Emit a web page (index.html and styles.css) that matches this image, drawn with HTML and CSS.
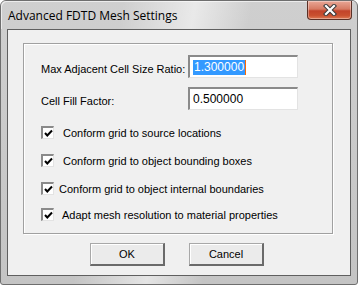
FILE: index.html
```html
<!DOCTYPE html>
<html>
<head>
<meta charset="utf-8">
<link rel="stylesheet" href="styles.css">
</head>
<body>
<div class="window">
  <div class="titlebar">
    <span class="title">Advanced FDTD Mesh Settings</span>
    <div class="close">
      <svg width="18" height="12" viewBox="0 0 18 12">
        <path d="M5 2 L13 10 M13 2 L5 10" stroke="#3a3a3a" stroke-width="4.2" stroke-linecap="square"/>
        <path d="M5 2 L13 10 M13 2 L5 10" stroke="#ffffff" stroke-width="2.2" stroke-linecap="square"/>
      </svg>
    </div>
  </div>
  <div class="client">
    <div class="group">
      <div class="fields">
        <label class="label">Max Adjacent Cell Size Ratio:</label>
        <div class="edit"><span class="sel">1.300000</span><span class="caret"></span></div>
        <label class="label">Cell Fill Factor:</label>
        <div class="edit">0.500000</div>
      </div>
      <div class="checks">
        <div class="check"><span class="box"><svg width="9" height="9" viewBox="0 0 9 9"><path d="M1 4 L3.3 6.5 L8 1.5" fill="none" stroke="#000" stroke-width="2"/></svg></span><span class="ctext">Conform grid to source locations</span></div>
        <div class="check"><span class="box"><svg width="9" height="9" viewBox="0 0 9 9"><path d="M1 4 L3.3 6.5 L8 1.5" fill="none" stroke="#000" stroke-width="2"/></svg></span><span class="ctext">Conform grid to object bounding boxes</span></div>
        <div class="check tight"><span class="box"><svg width="9" height="9" viewBox="0 0 9 9"><path d="M1 4 L3.3 6.5 L8 1.5" fill="none" stroke="#000" stroke-width="2"/></svg></span><span class="ctext">Conform grid to object internal boundaries</span></div>
        <div class="check mid"><span class="box"><svg width="9" height="9" viewBox="0 0 9 9"><path d="M1 4 L3.3 6.5 L8 1.5" fill="none" stroke="#000" stroke-width="2"/></svg></span><span class="ctext">Adapt mesh resolution to material properties</span></div>
      </div>
    </div>
    <div class="buttons">
      <button class="btn">OK</button>
      <button class="btn">Cancel</button>
    </div>
  </div>
</div>
</body>
</html>
```
FILE: styles.css
```css
html, body {
  margin: 0;
  padding: 0;
  width: 358px;
  height: 285px;
  overflow: hidden;
  background: #ffffff;
}
.window {
  box-sizing: border-box;
  width: 358px;
  height: 285px;
  border: 1px solid #6e6e6e;
  border-radius: 6px 6px 3px 3px;
  background:
    linear-gradient(100deg, rgba(255,255,255,0) 30%, rgba(255,255,255,0.55) 48%, rgba(255,255,255,0) 62%),
    linear-gradient(180deg, #cfcfcf 0%, #c4c4c4 100%);
  display: flex;
  flex-direction: column;
  font-family: "Liberation Sans", Arial, sans-serif;
  font-size: 11px;
  color: #000;
}
.titlebar {
  height: 28px;
  display: flex;
  align-items: flex-start;
  justify-content: space-between;
  box-shadow: inset 1px 1px 0 rgba(255,255,255,0.6);
  border-radius: 5px 5px 0 0;
}
.title {
  font-family: "Open Sans", "Liberation Sans", sans-serif;
  font-size: 12px;
  margin: 6px 0 0 7px;
  color: #000;
}
.close {
  width: 43px;
  height: 18px;
  margin-right: 5px;
  border: 1px solid #5a3026;
  border-top: none;
  border-radius: 0 0 4px 4px;
  background: linear-gradient(180deg, #e9a796 0%, #d67a63 45%, #c2432a 55%, #c9502f 80%, #dd7a55 100%);
  box-shadow: inset 0 0 0 1px rgba(255,255,255,0.35);
  display: flex;
  align-items: center;
  justify-content: center;
}
.client {
  flex: 1;
  margin: 0 6px 8px 6px;
  border: 1px solid #5f5f5f;
  background: #f0f0f0;
  padding: 13px 17px 0 15px;
  display: flex;
  flex-direction: column;
}
.group {
  box-sizing: border-box;
  height: 191px;
  border: 1px solid #a0a0a0;
  box-shadow: inset 1px 1px 0 #ffffff, 1px 1px 0 #ffffff;
  padding: 11px 0 0 17px;
}
.fields {
  display: grid;
  grid-template-columns: 147px 110px;
  row-gap: 9px;
  align-items: center;
}
.label {
  padding-top: 4px;
}
.edit {
  box-sizing: border-box;
  height: 23px;
  background: #fff;
  border-top: 2px solid #8a8a8a;
  border-left: 2px solid #8a8a8a;
  border-right: 1px solid #e3e3e3;
  border-bottom: 1px solid #e3e3e3;
  padding: 1px 0 0 3px;
  font-family: "Liberation Sans", Arial, sans-serif;
  font-size: 12px;
  line-height: 17px;
  display: flex;
  align-items: center;
}
.sel {
  background: #3399ff;
  color: #fff;
  padding: 0 1px;
  line-height: 15px;
}
.caret {
  width: 1px;
  height: 15px;
  background: #ff6a00;
}
.checks {
  display: flex;
  flex-direction: column;
  margin-top: 16px;
  gap: 15px;
}
.check {
  display: flex;
  align-items: center;
  gap: 9px;
  height: 13px;
}
.check.tight { gap: 5px; }
.check.mid { gap: 8px; margin-top: -2px; }
.box {
  box-sizing: border-box;
  width: 13px;
  height: 13px;
  flex: none;
  background: #fff;
  border-top: 2px solid #8a8a8a;
  border-left: 2px solid #8a8a8a;
  border-right: 1px solid #e3e3e3;
  border-bottom: 1px solid #e3e3e3;
  display: flex;
  align-items: center;
  justify-content: center;
}
.ctext {
  white-space: nowrap;
}
.buttons {
  display: flex;
  justify-content: center;
  gap: 24px;
  margin-top: 9px;
  padding-right: 2px;
}
.btn {
  box-sizing: border-box;
  width: 75px;
  height: 23px;
  font-family: "Liberation Sans", Arial, sans-serif;
  font-size: 11px;
  color: #000;
  background: #ebebeb;
  border-top: 1px solid #a8a8a8;
  border-left: 1px solid #a8a8a8;
  border-right: 2px solid #6a6a6a;
  border-bottom: 2px solid #6a6a6a;
  box-shadow: inset 1px 1px 0 #ffffff;
  padding: 0;
}
```
